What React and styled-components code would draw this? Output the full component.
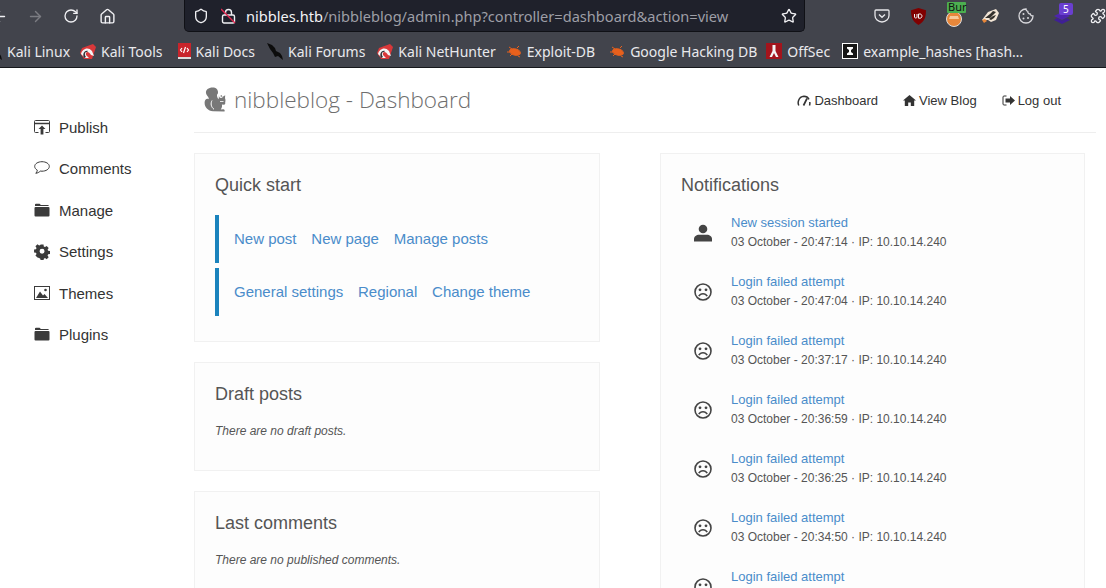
import React from "react";
import styled, { createGlobalStyle } from "styled-components";
import { ArrowLeft, ArrowRight, RotateCw, Home, Shield, Star, Puzzle } from "lucide-react";

const GlobalStyle = createGlobalStyle`
  html, body {
    margin: 0;
    height: 588px;
    overflow: hidden;
    background: #fff;
  }
  * { box-sizing: border-box; }
`;

const BrowserChrome = styled.div`
  background: #42444c;
  height: 68px;
  border-bottom: 1px solid #17181c;
  font-family: "Noto Sans", sans-serif;
  overflow: hidden;
`;

const Toolbar = styled.div`
  display: flex;
  align-items: flex-start;
  height: 36px;
`;

const ToolButtons = styled.div`
  display: flex;
  flex: none;
  align-items: center;
  height: 32px;
  margin-left: ${(p) => p.$offset}px;
`;

const ToolButton = styled.div`
  width: 36px;
  height: 32px;
  display: flex;
  align-items: center;
  justify-content: center;
  color: ${(p) => (p.$dim ? "#7b7c82" : "#f0f0f3")};
`;

const UrlBar = styled.div`
  flex: none;
  width: 621px;
  height: 32px;
  margin-left: 59px;
  background: #1f212b;
  border: 1px solid #101116;
  border-top: none;
  border-radius: 0 0 5px 5px;
  display: flex;
  align-items: center;
  padding: 0 7px 0 8px;
  color: #f0f0f3;
`;

const LockIcon = styled.div`
  width: 16px;
  display: flex;
  margin-left: 12px;
  margin-right: 9px;
`;

const Url = styled.div`
  flex: 1;
  font-size: 14.6px;
  white-space: nowrap;
  color: #9d9ea6;
  span { color: #f2f2f5; }
`;

const BookmarkBar = styled.div`
  display: flex;
  align-items: center;
  height: 30px;
  overflow: hidden;
  margin-left: -14px;
  gap: 12px;
`;

const Bookmark = styled.div`
  display: flex;
  align-items: center;
  gap: 5px;
  margin-left: ${(p) => p.$nudge || 0}px;
  font-size: 14px;
  color: #e9e9ec;
  white-space: nowrap;
  svg { flex: none; }
`;

const Page = styled.div`
  display: grid;
  grid-template-columns: 194px 902px;
  height: 520px;
  overflow: hidden;
  font-family: "Liberation Sans", Arial, sans-serif;
  color: #333;
`;

const Sidebar = styled.nav`
  display: flex;
  flex-direction: column;
  padding: 38.8px 0 0 34px;
`;

const SideItem = styled.div`
  display: flex;
  align-items: center;
  gap: 9px;
  height: 41.4px;
  font-size: 15px;
  color: #333;
  svg { flex: none; }
`;

const Main = styled.main`
  display: flex;
  flex-direction: column;
`;

const Header = styled.header`
  display: flex;
  align-items: center;
  justify-content: space-between;
  height: 65px;
  border-bottom: 1px solid #eeeeee;
  padding: 0 35px 0 10px;
`;

const Brand = styled.h1`
  display: flex;
  align-items: center;
  gap: 8px;
  margin: -2px 0 0;
  font-family: "Open Sans", sans-serif;
  font-weight: 300;
  font-size: 22.5px;
  color: #6e6e6e;
`;

const TopNav = styled.div`
  display: flex;
  gap: 25px;
  padding-top: 1px;
`;

const TopLink = styled.a`
  display: flex;
  align-items: center;
  gap: 3px;
  font-size: 13px;
  color: #333;
`;

const Columns = styled.div`
  display: grid;
  grid-template-columns: 406px 425px;
  column-gap: 60px;
  margin-top: 20px;
`;

const Column = styled.div`
  display: flex;
  flex-direction: column;
  gap: 20px;
`;

const Card = styled.section`
  background: #fdfdfd;
  border: 1px solid #f1f1f1;
  padding: 20px;
  min-height: ${(p) => p.$minHeight || 0}px;
`;

const CardTitle = styled.h2`
  margin: 0;
  font-size: 18px;
  line-height: 22px;
  font-weight: 400;
  color: #555;
`;

const QuickRow = styled.div`
  display: flex;
  align-items: center;
  gap: 14.8px;
  height: 48px;
  margin-top: ${(p) => p.$top}px;
  padding: 0 0 2px 15px;
  border-left: 4px solid #1b83bd;
`;

const QuickLink = styled.a`
  font-size: 15px;
  color: #4a8cca;
`;

const EmptyNote = styled.p`
  margin: 18px 0 0;
  padding-bottom: 11px;
  font-size: 12px;
  line-height: 16px;
  font-style: italic;
  color: #555;
`;

const NoticeList = styled.div`
  display: flex;
  flex-direction: column;
  margin-top: 7px;
`;

const Notice = styled.div`
  display: flex;
  align-items: center;
  height: 59px;
  padding-left: 13px;
`;

const NoticeIcon = styled.div`
  width: 37px;
  display: flex;
  color: #444;
`;

const NoticeText = styled.div`
  display: flex;
  flex-direction: column;
  gap: 5px;
  padding-bottom: 1px;
`;

const NoticeTitle = styled.a`
  font-size: 13px;
  line-height: 15px;
  color: #4a8cca;
`;

const NoticeMeta = styled.div`
  font-size: 12px;
  line-height: 15px;
  color: #555;
`;

const FolderIcon = () => (
  <svg width="16" height="14" viewBox="0 0 16 14" fill="#3b3b3b">
    <path d="M1 3V1.600C1 1 1.400.7 2 .7h3.400c.5 0 .8.2 1 .7l.2.5h7.200c.6 0 1 .3 1 .9V3z" />
    <rect x="0.500" y="4" width="15" height="9.600" rx="1" />
  </svg>
);

const PublishIcon = () => (
  <svg width="16" height="15" viewBox="0 0 16 15" fill="none" stroke="#3b3b3b">
    <path d="M4.500 12.500H1.500a1 1 0 0 1-1-1V1.500a1 1 0 0 1 1-1h13a1 1 0 0 1 1 1v10a1 1 0 0 1-1 1h-3" />
    <path d="M.5 3.500h15" strokeWidth="1.500" />
    <path d="M8 5.500 11.500 9H9.400v5.500H6.600V9H4.500z" fill="#3b3b3b" stroke="none" />
  </svg>
);

const CommentIcon = () => (
  <svg width="16" height="15" viewBox="0 0 16 15" fill="none" stroke="#3b3b3b">
    <path d="M8 .7C4 .7.700 2.700.700 5.400c0 1.500 1 2.800 2.600 3.700-.1 1.200-.6 2.300-1.500 3.200 1.700-.2 3.300-1 4.400-2.200.6.100 1.200.1 1.800.1 4 0 7.300-2.100 7.300-4.800S12 .7 8 .7z" />
  </svg>
);

const CogIcon = () => (
  <svg width="16" height="16" viewBox="0 0 16 16" fill="#3b3b3b">
    <path
      fillRule="evenodd"
      d="M6.400 0h3.200l.3 2.100 1.300.6 1.800-1.200 2.200 2.200-1.200 1.800.6 1.300 2.100.3v3.200l-2.100.3-.6 1.300 1.200 1.800-2.200 2.200-1.800-1.200-1.300.6-.3 2.100H6.400l-.3-2.100-1.300-.6L3 14.100.8 11.900 2 10.100l-.6-1.300L-.7 8.500V5.300l2.100-.3.600-1.300L.8 1.900 3 -.3l1.800 1.200 1.300-.6zM8 4.500a2.700 2.700 0 1 0 0 5.400 2.700 2.700 0 0 0 0-5.400z"
      transform="translate(.7 .6) scale(.92)"
    />
  </svg>
);

const ImageIcon = () => (
  <svg width="16" height="14" viewBox="0 0 16 14">
    <rect x=".5" y=".5" width="15" height="13" fill="none" stroke="#3b3b3b" />
    <path d="M2 12 6 5.500l3 4 1.500-1.500 3.500 4z" fill="#3b3b3b" />
    <circle cx="11.500" cy="4" r="1.300" fill="#3b3b3b" />
  </svg>
);

const PersonIcon = () => (
  <svg width="18" height="18" viewBox="0 0 18 18" fill="#444">
    <circle cx="9" cy="5" r="4.300" />
    <path d="M0 17.500v-2.600c0-2.500 2.500-4.200 5-4.200h8c2.500 0 5 1.700 5 4.200v2.600z" />
  </svg>
);

const SadIcon = () => (
  <svg width="18" height="18" viewBox="0 0 18 18" fill="none" stroke="#444" strokeWidth="1.600">
    <circle cx="9" cy="9" r="8" />
    <circle cx="6" cy="6.800" r="1.400" fill="#444" stroke="none" />
    <circle cx="12" cy="6.800" r="1.400" fill="#444" stroke="none" />
    <path d="M4.800 13.200c.9-1.700 2.400-2.500 4.200-2.500s3.300.8 4.200 2.500" />
  </svg>
);

const GaugeIcon = () => (
  <svg width="14" height="11" viewBox="0 0 14 11" fill="none" stroke="#333" strokeWidth="1.500">
    <path d="M1.800 10.500C.5 8 1 2 7 1.300c3 0 4 1 5 3" />
    <path d="M12.500 10.500c.4-1 .5-2.200.3-3.500" />
    <path d="M6.500 10.500 10 3.500" strokeWidth="1.700" />
  </svg>
);

const HomeSolidIcon = () => (
  <svg width="13" height="11" viewBox="0 0 13 11" fill="#333">
    <path d="M6.500 0 13 5.600h-1.800V11H7.800V7.400H5.200V11H1.800V5.600H0z" />
  </svg>
);

const LogoutIcon = () => (
  <svg width="13" height="11" viewBox="0 0 13 11">
    <path d="M4.500 1H2a1 1 0 0 0-1 1v7a1 1 0 0 0 1 1h2.500" fill="none" stroke="#333" />
    <path d="M8 1l5 4.500L8 10V7.500H3.500v-4H8z" fill="#333" />
  </svg>
);

const SquirrelLogo = () => (
  <svg width="22" height="25" viewBox="0 0 22 25">
    <path
      d="M10 .5C5 0 1.500 2.500 2 6c.4 2.600 3 3.800 2.800 6.200C2.800 11 .7 12.500.6 15.500c-.2 4.500 3.500 8.500 8.400 8.800l11.500.2c.5-1 0-2-1.200-2.200l-2.600.1c1.300-1.600 1.600-3.500 1.200-5l2.100.4c1-.2 1.500-1.300 1.200-2.600.5-1.400.3-3-.2-4l.2-2.900-2 1.200c-1.300-.6-2.800-.5-3.900.3L14.500 8c.7 1.700.4 3.100 0 4.300-1-1.400-1.800-2.800-1.400-4.700 1.700-1 1.300-6.400-3.100-7.100z"
      fill="#787878"
    />
    <circle cx="17" cy="9" r="1.900" fill="#fff" />
    <circle cx="17.300" cy="9" r=".8" fill="#666" />
    <path d="M8 13.500c-1.600 3-1 6.500 2 8.800" fill="none" stroke="#fff" strokeWidth="1" />
    <path d="M16 14.500h3.500" stroke="#fff" strokeWidth=".8" />
  </svg>
);

const KaliIcon = () => (
  <svg width="16" height="15" viewBox="0 0 16 15">
    <path d="M2 4 13 0l3 3-2 6-2 6H4L0 9z" fill="#d9383a" />
    <path d="M1 10C2 5 8 2 12 7l2 5-3-1C9 7 5 7 6 11l3 3H5z" fill="#f4f4f4" />
    <path d="M4 14C2 9 5 6 8 7l-1 1c-2 0-3 2-1 5z" fill="#2f3036" />
  </svg>
);

const DocsIcon = () => (
  <svg width="14" height="16" viewBox="0 0 14 16">
    <rect x="1" y="0" width="13" height="14" fill="#c8242b" />
    <rect x="1" y="14" width="13" height="2" fill="#ddd" />
    <path d="M5 5 3.500 7 5 9M10 5l1.500 2L10 9M8.500 4 6.500 10" stroke="#fff" strokeWidth="1.200" fill="none" />
  </svg>
);

const ForumIcon = () => (
  <svg width="16" height="17" viewBox="0 0 16 17">
    <path d="M0 0 5 2 8 5 9 8 13 10 15 13 16 17 11 13 8 14 6 10 3 6z" fill="#0c0c0c" />
  </svg>
);

const BugIcon = () => (
  <svg width="16" height="13" viewBox="0 0 16 13" stroke="#e8601c" strokeWidth="1">
    <ellipse cx="9" cy="7" rx="5.500" ry="3" fill="#e8601c" transform="rotate(15 9 7)" />
    <path d="M3 2 6 4M1 7h3M4 11l2-2M11 3l2-2M12 11l2 1" fill="none" />
  </svg>
);

const OffSecIcon = () => (
  <svg width="16" height="16" viewBox="0 0 16 16">
    <rect width="16" height="16" fill="#a3141c" />
    <path d="M6.500 2h3v6l3 6h-2.500L8 10l-2 4H3.500l3-6z" fill="#f4f4f4" />
  </svg>
);

const HashIcon = () => (
  <svg width="16" height="16" viewBox="0 0 16 16">
    <rect width="16" height="16" fill="#fff" />
    <rect x="1" y="1" width="14" height="14" fill="#171717" />
    <path d="M5 4h6v1.500L9 7v2l2 1.500V12H5v-1.500L7 9V7L5 5.500z" fill="#fff" />
  </svg>
);

const PocketIcon = () => (
  <svg width="16" height="14" viewBox="0 0 16 14" fill="none" stroke="#e6e6e9" strokeWidth="1.300">
    <path d="M2 1h12a1 1 0 0 1 1 1v4.500a7 6.500 0 0 1-14 0V2a1 1 0 0 1 1-1z" />
    <path d="M5 5.500 8 8.300l3-2.800" strokeWidth="1.400" />
  </svg>
);

const UBlockIcon = () => (
  <svg width="15" height="17" viewBox="0 0 15 17">
    <path d="M7.500 0 15 2.200c0 6-1 11-7.500 14.800C1 13.200 0 8.200 0 2.200z" fill="#800000" />
    <path d="M3.500 6v3.200c0 1.100 2.500 1.100 2.500 0V6M7.500 6v4.200h1.500c2.600 0 2.600-4.200 0-4.200z" fill="none" stroke="#f2f2f2" strokeWidth="1" />
  </svg>
);

const BurpIcon = () => (
  <svg width="20" height="22" viewBox="0 0 20 22" style={{ overflow: "visible" }}>
    <circle cx="10" cy="14" r="7.500" fill="#e8873a" stroke="#ddd" strokeWidth="1" />
    <path d="M6 11h8l1 3H5z" fill="#f7c89a" />
    <rect x="3" y="-3" width="19" height="11" rx="1" fill="#4caf50" />
    <text x="4" y="6" fontSize="11" fill="#111" fontFamily="Noto Sans, sans-serif">Bur</text>
  </svg>
);

const BadgerIcon = () => (
  <svg width="17" height="14" viewBox="0 0 17 14">
    <path d="M0 11 6 3l8-3 3 4-3 7-5 2-3-2z" fill="#f3e6d6" />
    <path d="M3 9 8 5l3-3 3 1-3 3-3 3zM7 10l4-3 3-1-2 3-3 2z" fill="#33302c" />
    <path d="M0 11l3-1 2 2-3 2z" fill="#e8873a" />
  </svg>
);

const CookieIcon = () => (
  <svg width="16" height="16" viewBox="0 0 16 16" fill="none" stroke="#d8d8dc" strokeWidth="1.300">
    <path d="M8 1a7 7 0 1 0 7 7c-1.500 0-2.500-.8-2.700-2C11 6 9.500 5 9.800 3.400 8.700 3.200 8 2.200 8 1z" />
    <circle cx="5.500" cy="6" r="1" fill="#d8d8dc" stroke="none" />
    <circle cx="5.500" cy="10.500" r="1" fill="#d8d8dc" stroke="none" />
    <circle cx="10" cy="10" r="1" fill="#d8d8dc" stroke="none" />
  </svg>
);

const StackIcon = () => (
  <svg width="18" height="16" viewBox="0 0 18 16" style={{ overflow: "visible" }}>
    <path d="M9 16 1 12l3-2 5 2.500L14 10l3 2z" fill="#3f1f96" />
    <path d="M9 12 1 8l8-4 8 4z" fill="#4e25ae" />
    <rect x="6" y="-5" width="14" height="12" rx="2" fill="#6a3fd0" />
    <text x="10" y="5" fontSize="10" fill="#fff" fontFamily="Noto Sans, sans-serif">5</text>
  </svg>
);

const StruckLock = () => (
  <svg width="15" height="16" viewBox="0 0 15 16" fill="none">
    <rect x="1.500" y="7" width="12" height="8" rx="1.500" stroke="#f0f0f3" strokeWidth="1.400" />
    <path d="M4.500 7V4.500a3 3 0 0 1 6 0V7" stroke="#f0f0f3" strokeWidth="1.400" />
    <path d="M0 1 14 15" stroke="#e22850" strokeWidth="1.400" />
  </svg>
);

const bookmarks = [
  { label: "Kali Linux", icon: <ForumIcon /> },
  { label: "Kali Tools", icon: <KaliIcon />, nudge: -2 },
  { label: "Kali Docs", icon: <DocsIcon />, nudge: 2 },
  { label: "Kali Forums", icon: <ForumIcon /> },
  { label: "Kali NetHunter", icon: <KaliIcon /> },
  { label: "Exploit-DB", icon: <BugIcon />, nudge: -2 },
  { label: "Google Hacking DB", icon: <BugIcon />, nudge: 2 },
  { label: "OffSec", icon: <OffSecIcon />, nudge: -3 },
  { label: "example_hashes [hash…", icon: <HashIcon /> },
];

const sideItems = [
  { label: "Publish", icon: <PublishIcon /> },
  { label: "Comments", icon: <CommentIcon /> },
  { label: "Manage", icon: <FolderIcon /> },
  { label: "Settings", icon: <CogIcon /> },
  { label: "Themes", icon: <ImageIcon /> },
  { label: "Plugins", icon: <FolderIcon /> },
];

const notices = [
  { title: "New session started", meta: "03 October - 20:47:14 · IP: 10.10.14.240", icon: <PersonIcon /> },
  { title: "Login failed attempt", meta: "03 October - 20:47:04 · IP: 10.10.14.240", icon: <SadIcon /> },
  { title: "Login failed attempt", meta: "03 October - 20:37:17 · IP: 10.10.14.240", icon: <SadIcon /> },
  { title: "Login failed attempt", meta: "03 October - 20:36:59 · IP: 10.10.14.240", icon: <SadIcon /> },
  { title: "Login failed attempt", meta: "03 October - 20:36:25 · IP: 10.10.14.240", icon: <SadIcon /> },
  { title: "Login failed attempt", meta: "03 October - 20:34:50 · IP: 10.10.14.240", icon: <SadIcon /> },
  { title: "Login failed attempt", meta: "03 October - 20:34:12 · IP: 10.10.14.240", icon: <SadIcon /> },
];

const App = () => (
  <>
    <GlobalStyle />
    <BrowserChrome>
      <Toolbar>
        <ToolButtons $offset={-19}>
          <ToolButton><ArrowLeft size={17} /></ToolButton>
          <ToolButton $dim><ArrowRight size={17} /></ToolButton>
          <ToolButton><RotateCw size={16} /></ToolButton>
          <ToolButton><Home size={17} /></ToolButton>
        </ToolButtons>
        <UrlBar>
          <Shield size={16} />
          <LockIcon><StruckLock /></LockIcon>
          <Url><span>nibbles.htb</span>/nibbleblog/admin.php?controller=dashboard&amp;action=view</Url>
          <Star size={16} />
        </UrlBar>
        <ToolButtons $offset={59}>
          <ToolButton><PocketIcon /></ToolButton>
          <ToolButton><UBlockIcon /></ToolButton>
          <ToolButton><BurpIcon /></ToolButton>
          <ToolButton><BadgerIcon /></ToolButton>
          <ToolButton><CookieIcon /></ToolButton>
          <ToolButton><StackIcon /></ToolButton>
          <ToolButton><Puzzle size={16} /></ToolButton>
        </ToolButtons>
      </Toolbar>
      <BookmarkBar>
        {bookmarks.map((b) => (
          <Bookmark key={b.label} $nudge={b.nudge}>{b.icon}{b.label}</Bookmark>
        ))}
      </BookmarkBar>
    </BrowserChrome>
    <Page>
      <Sidebar>
        {sideItems.map((item) => (
          <SideItem key={item.label}>{item.icon}{item.label}</SideItem>
        ))}
      </Sidebar>
      <Main>
        <Header>
          <Brand><SquirrelLogo />nibbleblog - Dashboard</Brand>
          <TopNav>
            <TopLink><GaugeIcon />Dashboard</TopLink>
            <TopLink><HomeSolidIcon />View Blog</TopLink>
            <TopLink><LogoutIcon />Log out</TopLink>
          </TopNav>
        </Header>
        <Columns>
          <Column>
            <Card $minHeight={189}>
              <CardTitle>Quick start</CardTitle>
              <QuickRow $top={19}>
                <QuickLink>New post</QuickLink>
                <QuickLink>New page</QuickLink>
                <QuickLink>Manage posts</QuickLink>
              </QuickRow>
              <QuickRow $top={5}>
                <QuickLink>General settings</QuickLink>
                <QuickLink>Regional</QuickLink>
                <QuickLink>Change theme</QuickLink>
              </QuickRow>
            </Card>
            <Card>
              <CardTitle>Draft posts</CardTitle>
              <EmptyNote>There are no draft posts.</EmptyNote>
            </Card>
            <Card>
              <CardTitle>Last comments</CardTitle>
              <EmptyNote>There are no published comments.</EmptyNote>
            </Card>
          </Column>
          <Card>
            <CardTitle>Notifications</CardTitle>
            <NoticeList>
              {notices.map((n) => (
                <Notice key={n.meta}>
                  <NoticeIcon>{n.icon}</NoticeIcon>
                  <NoticeText>
                    <NoticeTitle>{n.title}</NoticeTitle>
                    <NoticeMeta>{n.meta}</NoticeMeta>
                  </NoticeText>
                </Notice>
              ))}
            </NoticeList>
          </Card>
        </Columns>
      </Main>
    </Page>
  </>
);

export default App;
